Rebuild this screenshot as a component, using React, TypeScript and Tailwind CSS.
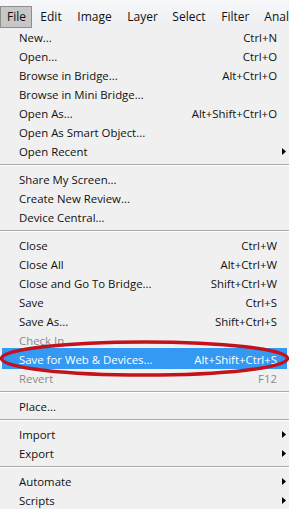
import { ReactNode } from "react";

type Item =
    | { sep: true }
    | { label: string; shortcut?: string; sub?: boolean; disabled?: boolean; active?: boolean };

const items: Item[] = [
    { label: "New...", shortcut: "Ctrl+N" },
    { label: "Open...", shortcut: "Ctrl+O" },
    { label: "Browse in Bridge...", shortcut: "Alt+Ctrl+O" },
    { label: "Browse in Mini Bridge..." },
    { label: "Open As...", shortcut: "Alt+Shift+Ctrl+O" },
    { label: "Open As Smart Object..." },
    { label: "Open Recent", sub: true },
    { sep: true },
    { label: "Share My Screen..." },
    { label: "Create New Review..." },
    { label: "Device Central..." },
    { sep: true },
    { label: "Close", shortcut: "Ctrl+W" },
    { label: "Close All", shortcut: "Alt+Ctrl+W" },
    { label: "Close and Go To Bridge...", shortcut: "Shift+Ctrl+W" },
    { label: "Save", shortcut: "Ctrl+S" },
    { label: "Save As...", shortcut: "Shift+Ctrl+S" },
    { label: "Check In", disabled: true },
    { label: "Save for Web & Devices...", shortcut: "Alt+Shift+Ctrl+S", active: true },
    { label: "Revert", shortcut: "F12", disabled: true },
    { sep: true },
    { label: "Place..." },
    { sep: true },
    { label: "Import", sub: true },
    { label: "Export", sub: true },
    { sep: true },
    { label: "Automate", sub: true },
    { label: "Scripts", sub: true },
];

function Arrow() {
    return (
        <svg width="4" height="7" viewBox="0 0 4 7" className="absolute right-[3px] top-[6px]">
            <path d="M0 0 L4 3.5 L0 7 Z" fill="#000" />
        </svg>
    );
}

function MenuRow({ item }: { item: Item }): ReactNode {
    if ("sep" in item) {
        return (
            <div className="h-[9px] pt-[3px]">
                <div className="h-px bg-[#a9a9a9]" />
                <div className="h-px bg-white" />
            </div>
        );
    }
    if (item.active) {
        return (
            <div className="mx-[2px] -mt-[2px] flex h-[21px] items-center justify-between bg-[#3399f3] pl-[17px] pr-[10px] pt-[2px] text-white">
                <span>{item.label}</span>
                <span>{item.shortcut}</span>
            </div>
        );
    }
    const color = item.disabled ? "text-[#8a8a8a]" : "text-[#111]";
    return (
        <div className="relative h-[19px]">
            <div className={`flex h-full items-center justify-between pl-[19px] pr-[12px] ${color}`}>
                <span>{item.label}</span>
                {item.shortcut && <span>{item.shortcut}</span>}
            </div>
            {item.sub && <Arrow />}
        </div>
    );
}

export default function App() {
    return (
        <div
            className="relative w-[289px] h-[509px] overflow-hidden bg-[#f0f0f0] text-[11.4px] leading-none"
            style={{ fontFamily: '"Open Sans", "Noto Sans", sans-serif' }}
        >
            <div className="flex h-[28px] items-end bg-gradient-to-b from-[#f7f8fa] to-[#eceef1] text-[12px] text-[#111]">
                <div className="flex h-[22px] w-[33px] items-center border border-[#8d8d8d] bg-[#c7c7c7] pl-[6px]">
                    File
                </div>
                <div className="flex h-[22px] items-center whitespace-nowrap pl-[8px]">
                    <span className="w-[37px]">Edit</span>
                    <span className="w-[50px]">Image</span>
                    <span className="w-[45px]">Layer</span>
                    <span className="w-[49px]">Select</span>
                    <span className="w-[43px]">Filter</span>
                    <span>Anal</span>
                </div>
            </div>

            <div>
                {items.map((it, i) => (
                    <MenuRow key={i} item={it} />
                ))}
            </div>

            <svg
                className="pointer-events-none absolute left-0 top-[336px]"
                width="289"
                height="46"
                viewBox="0 0 289 46"
            >
                <ellipse cx="144.5" cy="22.5" rx="143" ry="16.5" fill="none" stroke="#c3121c" strokeWidth="3.5" />
            </svg>
        </div>
    );
}
